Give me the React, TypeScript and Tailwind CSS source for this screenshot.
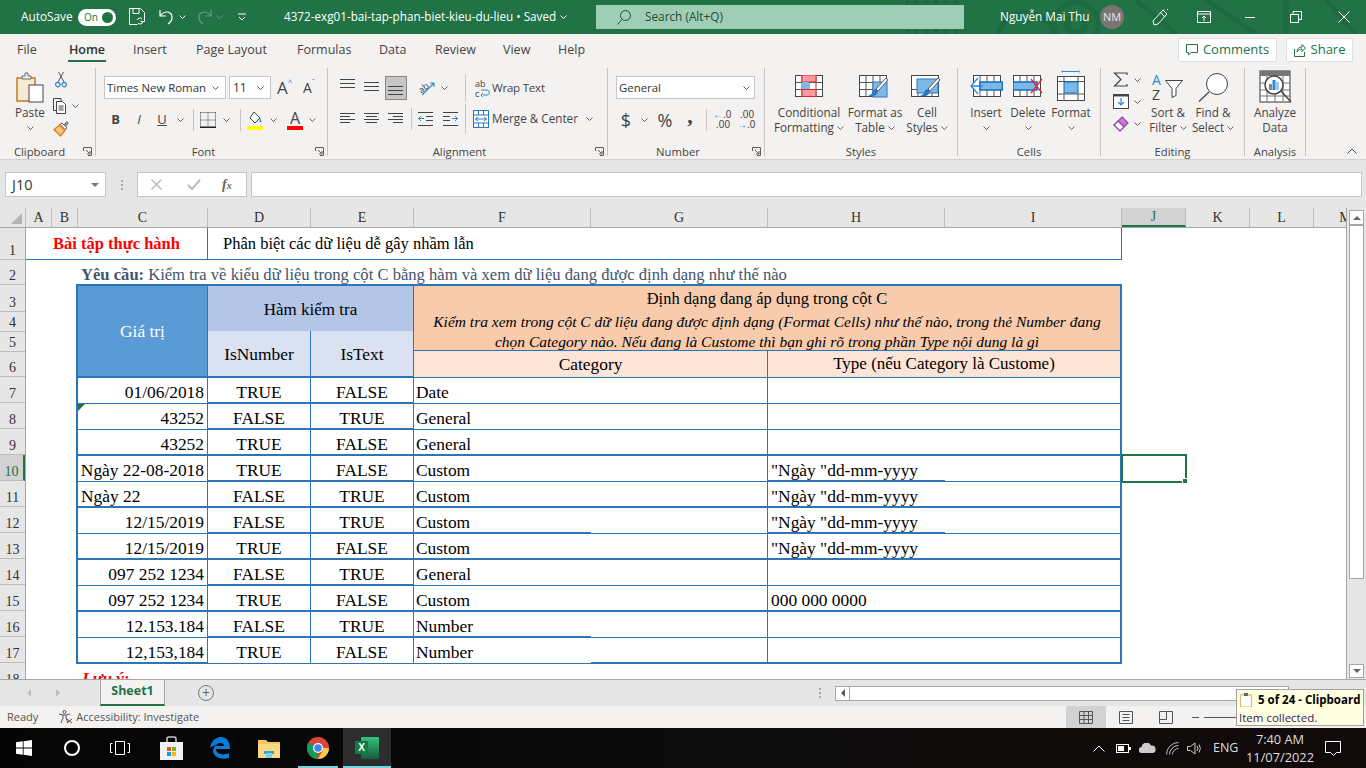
import React from "react";

const SERIF = "font-['Liberation_Serif',serif]";
const BLUE = "border-[#2e75b6]";

const Chev = ({ color = "#605e5c" }: { color?: string }) => (
  <svg width="7" height="4" viewBox="0 0 7 4" className="shrink-0">
    <path d="M.5.5l3 3 3-3" fill="none" stroke={color} />
  </svg>
);

const ChevBox = ({ className }: { className: string }) => (
  <div className={`flex items-center justify-center ${className}`}>
    <Chev />
  </div>
);

const Launcher = () => (
  <svg width="9" height="9" viewBox="0 0 9 9" className="shrink-0">
    <path d="M.5 4V.5H8.500V8.500H5M3 3l4 4M7 4v3H4" fill="none" stroke="#605e5c" />
  </svg>
);

function Group({ className, pad = "", label, launcher, children }: { className: string; pad?: string; label: string; launcher?: boolean; children: React.ReactNode }) {
  return (
    <div className={`flex flex-col h-[88px] mt-[2px] border-r border-[#c8c6c4] shrink-0 ${className}`}>
      <div className={`h-[76px] ${pad}`}>{children}</div>
      <div className="h-[12px] leading-[16px] flex text-[11.3px] text-[#444]">
        <div className="flex-1 text-center">{label}</div>
        {launcher && (
          <div className="w-[16px] flex items-center justify-start pl-[4px] pt-[3px]">
            <Launcher />
          </div>
        )}
      </div>
    </div>
  );
}

function BigBtn({ className, top = "pt-[7px]", icon, l1, l2, chev, chevBelow }: { className: string; top?: string; icon: React.ReactNode; l1: string; l2?: string; chev?: boolean; chevBelow?: boolean }) {
  return (
    <div className={`flex flex-col items-center text-[11.7px] leading-[15px] text-[#444] whitespace-nowrap shrink-0 ${className}`}>
      <div className={`h-[37px] flex items-start justify-center ${top}`}>{icon}</div>
      <div>{l1}</div>
      {l2 && (
        <div className="flex items-center gap-[3px]">
          {l2}
          {chev && <Chev />}
        </div>
      )}
      {chevBelow && (
        <div className="h-[15px] flex items-center">
          <Chev />
        </div>
      )}
    </div>
  );
}

// ---------- ribbon icons ----------
const Lines = ({ rows, tall }: { rows: [number, number, number][]; tall?: boolean }) => (
  <svg width="16" height={tall ? 24 : 14} viewBox={tall ? "0 0 16 24" : "0 0 16 14"} className="shrink-0">
    {rows.map(([x, w, y]) => (
      <rect key={`${x}${y}`} x={x} y={y} width={w} height="1" fill="#444" />
    ))}
  </svg>
);

const PasteIcon = () => (
  <svg width="29" height="31" viewBox="0 0 29 31">
    <rect x="1" y="6" width="18" height="23" fill="#f7e9d3" stroke="#c27c2c" strokeWidth="1.5" />
    <path d="M6 6V4h3V1h3v3h3v3H6z" fill="#f3f2f1" stroke="#666" />
    <rect x="13" y="13" width="14" height="17" fill="#fff" stroke="#444" />
  </svg>
);
const CutIcon = () => (
  <svg width="12" height="17" viewBox="0 0 12 17">
    <path d="M3 11L8.500 1M9 11L3.500 1" stroke="#555" fill="none" />
    <circle cx="2.800" cy="13.600" r="2.200" fill="none" stroke="#2b88d8" strokeWidth="1.200" />
    <circle cx="9.200" cy="13.600" r="2.200" fill="none" stroke="#2b88d8" strokeWidth="1.200" />
  </svg>
);
const CopyIcon = () => (
  <svg width="14" height="16" viewBox="0 0 14 16">
    <path d="M3 12.500H.5V.5H8V3" fill="none" stroke="#444" />
    <path d="M3.500 3.500h6l3 3v9h-9zM5.500 8h5M5.500 10h5M5.500 12h5" fill="#fff" stroke="#444" />
  </svg>
);
const PainterIcon = () => (
  <svg width="17" height="17" viewBox="0 0 17 17">
    <path d="M9 3l5 5-2 1.500-5-5z" fill="#fff" stroke="#555" />
    <path d="M14 1l2 2-3 4-2.500-2.500z" fill="#888" />
    <path d="M6.500 5L12 10.500 7.500 16 1 9.500z" fill="#fbc37a" stroke="#d97a12" strokeWidth="1.200" />
  </svg>
);
const BorderIcon = () => (
  <svg width="16" height="16" viewBox="0 0 16 16">
    <path d="M.5.5h15M.5.5v15M15.500.5v15M8 .5v15M.5 8h15" stroke="#444" strokeDasharray="1 1" fill="none" />
    <rect x="0" y="14.500" width="16" height="1.500" fill="#222" />
  </svg>
);
const FillIcon = () => (
  <svg width="17" height="19" viewBox="0 0 17 19">
    <path d="M7 1l6 6-5 5-5-5z" fill="#fff" stroke="#444" />
    <path d="M13 7c1 1.500 2 3 1 4s-2-.5-1-4z" fill="#2b88d8" />
    <rect x="0" y="15" width="16" height="4" fill="#ffff00" />
  </svg>
);
const ColorIcon = () => (
  <div className="flex flex-col items-center w-[16px] leading-none">
    <span className="text-[16px] h-[15px] text-[#444] leading-[15px]">A</span>
    <span className="block w-[16px] h-[4px] bg-[#ff0000]" />
  </div>
);
const OrientIcon = () => (
  <svg width="17" height="18" viewBox="0 0 17 18" className="overflow-visible">
    <text x="-1" y="11" fontSize="9" fill="#444" transform="rotate(-40 6 8)">ab</text>
    <path d="M3 16L15 4M15 4h-4M15 4v4" stroke="#2b88d8" fill="none" strokeWidth="1.200" />
  </svg>
);
const WrapIcon = () => (
  <svg width="16" height="20" viewBox="0 0 16 20" className="overflow-visible">
    <text x="0" y="9" fontSize="9" fill="#444">ab</text>
    <text x="0" y="19" fontSize="9" fill="#444">c</text>
    <path d="M8 17h4c3 0 3-5 0-5H6M8 15l-2 2 2 2" stroke="#2b88d8" fill="none" />
  </svg>
);
const MergeIcon = () => (
  <svg width="16" height="18" viewBox="0 0 16 18">
    <rect x=".5" y=".5" width="15" height="17" fill="#fff" stroke="#2b79c2" />
    <path d="M.5 5h15M.5 13h15M5.500.5V5M10.500.5V5M5.500 13v5M10.500 13v5" stroke="#2b79c2" />
    <path d="M2.500 9h11M5 7L2.500 9 5 11M11 7l2.500 2-2.500 2" stroke="#2b79c2" fill="none" />
  </svg>
);
const IndentIcon = ({ flip }: { flip?: boolean }) => (
  <svg width="15" height="14" viewBox="0 0 15 14" style={flip ? { transform: "scaleX(-1)" } : undefined}>
    <path d="M0 .5h15M8 4.500h7M8 8.500h7M0 13.500h15" stroke="#444" />
    <path d="M6 6.500H0M3 4L.5 6.500 3 9" stroke="#2b88d8" fill="none" />
  </svg>
);

const GridLines = () => (
  <>
    <rect x=".5" y=".5" width="27" height="21" fill="#fff" stroke="#444" />
    <path d="M7 .5v21M14 .5v21M21 .5v21M.5 7.500h27M.5 14.500h27" stroke="#555" />
  </>
);
const Brush = () => (
  <g>
    <path d="M29 5L19 16l-2-2L27 3z" fill="#fff" stroke="#555" />
    <path d="M17 14c-3 0-4 3-4 4s-2 2-4 2c3 2 9 2 10-4z" fill="#2b79c2" />
  </g>
);
const ConditionalIcon = () => (
  <svg width="28" height="22" viewBox="0 0 28 22">
    <GridLines />
    <rect x="7" y="0" width="14" height="7" fill="#ff9a9e" stroke="#e3242b" />
    <rect x="7" y="7" width="7" height="7.500" fill="#7cb8e8" />
    <rect x="7" y="14.500" width="14" height="7" fill="#ff9a9e" stroke="#e3242b" />
  </svg>
);
const FormatTableIcon = () => (
  <svg width="32" height="27" viewBox="0 0 32 27">
    <GridLines />
    <rect x="14" y="7" width="14" height="15" fill="#7cb8e8" stroke="#2b79c2" />
    <Brush />
  </svg>
);
const CellStylesIcon = () => (
  <svg width="32" height="27" viewBox="0 0 32 27">
    <rect x=".5" y=".5" width="27" height="21" fill="#fff" stroke="#444" />
    <path d="M7 14.500v7M14 14.500v7M21 14.500v7M.5 14.500h27" stroke="#555" />
    <rect x="6" y="4" width="21" height="14" fill="#7cb8e8" stroke="#2b79c2" />
    <Brush />
  </svg>
);
const InsertIcon = () => (
  <svg width="33" height="22" viewBox="0 0 33 22">
    <rect x="3.500" y=".5" width="27" height="21" fill="#fff" stroke="#444" />
    <path d="M10 .5v21M17 .5v21M24 .5v21" stroke="#555" />
    <rect x="10" y="7" width="22.500" height="8" fill="#7cb8e8" stroke="#106ebe" strokeWidth="1.500" />
    <path d="M8 3L1 11l7 8M1 11h12" fill="#fff" stroke="#2b88d8" strokeWidth="1.300" />
  </svg>
);
const DeleteIcon = () => (
  <svg width="30" height="22" viewBox="0 0 30 22">
    <rect x=".5" y=".5" width="27" height="21" fill="#fff" stroke="#444" />
    <path d="M7 .5v21M14 .5v21M21 .5v21" stroke="#555" />
    <rect x="0" y="7" width="24" height="8" fill="#7cb8e8" stroke="#106ebe" strokeWidth="1.500" />
    <path d="M18 4l11 14M29 4L18 18" stroke="#e3242b" strokeWidth="1.300" />
  </svg>
);
const FormatIcon = () => (
  <svg width="28" height="31" viewBox="0 0 28 31">
    <path d="M5 1.500h17M5 .5v2M22 .5v2" stroke="#2b88d8" fill="none" />
    <rect x=".5" y="6.500" width="27" height="24" fill="#fff" stroke="#444" />
    <path d="M7 6.500v5M21 6.500v5M7 24v7M21 24v7M.5 11.500h27M.5 24h27" stroke="#555" />
    <rect x="7" y="12" width="14" height="11" fill="#7cb8e8" stroke="#106ebe" />
  </svg>
);
const SigmaIcon = () => (
  <svg width="15" height="15" viewBox="0 0 15 15">
    <path d="M14 3V1H1.500L8 7.500 1.500 14H14v-2" fill="none" stroke="#444" strokeWidth="1.200" />
  </svg>
);
const FillDownIcon = () => (
  <svg width="16" height="15" viewBox="0 0 16 15">
    <rect x=".5" y=".5" width="15" height="14" fill="#fff" stroke="#444" />
    <rect x="0" y="0" width="16" height="2.500" fill="#444" />
    <path d="M8 4v7M5 8l3 3 3-3" stroke="#2b88d8" fill="none" strokeWidth="1.200" />
  </svg>
);
const EraserIcon = () => (
  <svg width="16" height="16" viewBox="0 0 16 16">
    <path d="M9 1l6 6-8 8-6-6z" fill="#c27fd0" stroke="#9a3fb0" strokeWidth="1.200" />
    <path d="M5 5l6 6-4 4-6-6z" fill="#fff" stroke="#9a3fb0" strokeWidth="1.200" />
  </svg>
);
const SortIcon = () => (
  <svg width="32" height="28" viewBox="0 0 32 28" className="overflow-visible">
    <text x="0" y="12" fontSize="14" fill="#2b88d8">A</text>
    <text x="0" y="27" fontSize="14" fill="#444">Z</text>
    <path d="M13.500 7.500h17l-6.500 8v7l-4 2v-9z" fill="#fff" stroke="#444" />
  </svg>
);
const FindIcon = () => (
  <svg width="31" height="29" viewBox="0 0 31 29">
    <circle cx="19" cy="11" r="10.500" fill="#fff" stroke="#444" />
    <path d="M11 19L1 28.500" stroke="#444" strokeWidth="1.200" />
  </svg>
);
const AnalyzeIcon = () => (
  <svg width="33" height="33" viewBox="0 0 33 33">
    <rect x="1" y="1" width="30" height="31" fill="#fff" stroke="#555" strokeWidth="1.200" />
    <rect x="1" y="1" width="30" height="5" fill="#777" />
    <path d="M8 6v26M16 6v26M24 6v26M1 13h30M1 20h30M1 26h30" stroke="#777" />
    <circle cx="15" cy="15" r="9" fill="#fff" stroke="#444" strokeWidth="1.500" />
    <rect x="10" y="14" width="3" height="6" fill="#888" />
    <rect x="13.500" y="10" width="3" height="10" fill="#2b88d8" />
    <rect x="17" y="12" width="3" height="8" fill="#a0c8ea" />
    <path d="M22 21l10 11" stroke="#444" strokeWidth="1.500" />
  </svg>
);

// ---------- title bar ----------
function TitleBar() {
  return (
    <div className="relative h-[34px] shrink-0 bg-[#217346] text-white flex items-center text-[11.8px] whitespace-nowrap">
      <svg className="absolute right-0 top-0" width="460" height="34" viewBox="0 0 460 34" fill="none" stroke="#1d6a40" strokeWidth="5">
        <path d="M0 0v34M10 0v34M20 0v34M30 0v34M40 0v34M50 0v34" />
        <circle cx="170" cy="24" r="22" />
        <circle cx="170" cy="24" r="9" />
        <circle cx="120" cy="40" r="28" />
        <path d="M230 0l40 34M300 0l50 34M380 0v34M420 0l30 34" />
      </svg>
      <div className="relative flex items-center w-full">
        <span className="ml-[21px] w-[54px]">AutoSave</span>
        <div className="ml-[3px] w-[38px] h-[17px] rounded-full bg-white text-[#217346] flex items-center justify-between pl-[6px] pr-[3px] text-[10px]">
          On
          <span className="w-[11px] h-[11px] rounded-full bg-[#217346]" />
        </div>
        <svg className="ml-[13px]" width="16" height="18" viewBox="0 0 16 18" fill="none" stroke="#fff">
          <path d="M.5.5h11l4 4v9h-4M.5.5v16h8M4 .5v5h6v-5" />
          <path d="M8 12a3 3 0 015-1M14 14a3 3 0 01-5 1" />
        </svg>
        <svg className="ml-[14px]" width="16" height="16" viewBox="0 0 16 16" fill="none" stroke="#fff" strokeWidth="1.200">
          <path d="M1 1v6h6M1 7c3-4 7-5 10-3s3 8-2 11" />
        </svg>
        <div className="ml-[4px]"><Chev color="#fff" /></div>
        <svg className="ml-[10px]" width="16" height="16" viewBox="0 0 16 16" fill="none" stroke="#5f9e7d" strokeWidth="1.200">
          <path d="M15 1v6H9M15 7c-3-4-7-5-10-3s-3 8 2 11" />
        </svg>
        <div className="ml-[4px]"><Chev color="#5f9e7d" /></div>
        <svg className="ml-[15px]" width="8" height="8" viewBox="0 0 8 8" fill="none" stroke="#fff">
          <path d="M0 1h8M1 4l3 3 3-3" />
        </svg>
        <span className="ml-[38px] w-[272px] text-[11.7px]">4372-exg01-bai-tap-phan-biet-kieu-du-lieu • Saved</span>
        <div className="ml-[4px]"><Chev color="#fff" /></div>
        <div className="ml-[29px] w-[368px] h-[24px] bg-[#a0cdb5] flex items-center text-[#1e4d36]">
          <svg className="ml-[21px]" width="14" height="15" viewBox="0 0 14 15" fill="none" stroke="#1e4d36">
            <circle cx="8.500" cy="5.500" r="5" />
            <path d="M5 9.500l-4.500 5" />
          </svg>
          <span className="ml-[14px]">Search (Alt+Q)</span>
        </div>
        <span className="ml-[36px] w-[100px]">Nguyễn Mai Thu</span>
        <div className="w-[24px] h-[24px] rounded-full bg-[#7a7574] text-[#e6e6e6] text-[11px] flex items-center justify-center">NM</div>
        <svg className="ml-[28px]" width="16" height="17" viewBox="0 0 16 17" fill="none" stroke="#fff">
          <path d="M11 1l4 4-9 10-4 1-1-4zM8 3l5 5M12 .5l-1-1M15 1l1-1" />
        </svg>
        <svg className="ml-[29px]" width="14" height="12" viewBox="0 0 14 12" fill="none" stroke="#fff">
          <path d="M.5.5h13v11H.5zM.5 3h13M7 10V5M5 7l2-2 2 2" />
        </svg>
        <span className="ml-[34px] w-[10px] h-px bg-white" />
        <svg className="ml-[35px]" width="12" height="12" viewBox="0 0 12 12" fill="none" stroke="#fff">
          <path d="M.5 3.500h8v8h-8zM3 3.500V.5h8.500v8h-3" />
        </svg>
        <svg className="ml-[36px]" width="12" height="12" viewBox="0 0 12 12" fill="none" stroke="#fff">
          <path d="M.5.5l11 11M11.500.5l-11 11" />
        </svg>
      </div>
    </div>
  );
}

function Tabs() {
  return (
    <div className="h-[32px] shrink-0 bg-[#f3f2f1] flex items-center text-[12.5px] text-[#444] whitespace-nowrap">
      <span className="ml-[17px] w-[51px]">File</span>
      <div className="w-[38px] h-[32px] relative flex flex-col items-center justify-center font-semibold text-[#333]">
        Home
        <span className="absolute left-0 right-0 bottom-[4px] h-[2px] bg-[#217346]" />
      </div>
      <span className="ml-[27px] w-[63px]">Insert</span>
      <span className="w-[101px]">Page Layout</span>
      <span className="w-[82px]">Formulas</span>
      <span className="w-[56px]">Data</span>
      <span className="w-[68px]">Review</span>
      <span className="w-[55px]">View</span>
      <span className="w-[620px]">Help</span>
      <div className="w-[99px] h-[24px] rounded-[2px] bg-white border border-[#e1dfdd] flex items-center justify-center gap-[5px] text-[13px] text-[#217346]">
        <svg width="12" height="12" viewBox="0 0 12 12" fill="none" stroke="#217346">
          <path d="M.5.5h11v8H5L2.500 11V8.500h-2z" />
        </svg>
        Comments
      </div>
      <div className="ml-[9px] w-[67px] h-[24px] rounded-[2px] bg-white border border-[#e1dfdd] flex items-center justify-center gap-[5px] text-[13px] text-[#217346]">
        <svg width="12" height="13" viewBox="0 0 12 13" fill="none" stroke="#217346">
          <path d="M.5 5v7.500h10V8M3 8c0-3 2-5 5-5V.5L11.500 4 8 7.500V5C6 5 4 6 3 8z" />
        </svg>
        Share
      </div>
    </div>
  );
}

function Ribbon() {
  return (
    <div className="relative h-[94px] shrink-0 bg-[#f3f2f1] border-b border-[#d2d0ce] flex text-[12px] text-[#444] whitespace-nowrap">
      <Group className="w-[96px]" label="Clipboard" launcher>
        <div className="flex">
          <BigBtn className="w-[46px] ml-[7px]" top="pt-[4px]" icon={<PasteIcon />} l1="Paste" chevBelow />
          <div className="flex flex-col pt-[3px]">
            <div className="h-[23px] flex items-start pl-[2px]"><CutIcon /></div>
            <div className="h-[24px] flex items-center gap-[5px]"><CopyIcon /><Chev /></div>
            <div className="h-[20px] flex items-center"><PainterIcon /></div>
          </div>
        </div>
      </Group>

      <Group className="w-[232px]" pad="pl-[8px]" label="Font" launcher>
        <div className="pt-[8px] h-[36px] flex items-start">
          <div className="w-[122px] h-[23px] bg-white border border-[#c8c6c4] flex items-center justify-between pl-[2px] pr-[6px] text-[11.4px] text-[#333]">
            Times New Roman <Chev />
          </div>
          <div className="ml-[3px] w-[42px] h-[23px] bg-white border border-[#c8c6c4] flex items-center justify-between pl-[3px] pr-[6px] text-[12px] text-[#333]">
            11 <Chev />
          </div>
          <div className="ml-[6px] w-[18px] h-[23px] text-[17px] leading-[23px] flex items-start">A<span className="text-[8px] leading-[12px] text-[#2b88d8]">^</span></div>
          <div className="ml-[8px] w-[15px] h-[23px] text-[14px] leading-[24px] flex items-start">A<span className="text-[8px] leading-[10px] text-[#2b88d8]">ˇ</span></div>
        </div>
        <div className="mt-[5px] h-[22px] flex items-center">
          <span className="w-[23px] text-center font-bold text-[13px]">B</span>
          <span className="w-[24px] text-center italic text-[13px]">I</span>
          <span className="w-[22px] text-center underline text-[13px]">U</span>
          <ChevBox className="w-[14px]" />
          <span className="ml-[6px] w-px h-[22px] bg-[#c8c6c4]" />
          <div className="ml-[6px]"><BorderIcon /></div>
          <ChevBox className="w-[20px]" />
          <span className="ml-[4px] w-px h-[22px] bg-[#c8c6c4]" />
          <div className="ml-[6px]"><FillIcon /></div>
          <ChevBox className="w-[18px]" />
          <div className="ml-[5px]"><ColorIcon /></div>
          <ChevBox className="w-[18px]" />
        </div>
      </Group>

      <Group className="w-[280px]" pad="pl-[12px]" label="Alignment" launcher>
        <div className="pt-[6px] h-[34px] flex items-center">
          <Lines tall rows={[[0, 15, 3], [0, 15, 7], [0, 15, 11]]} />
          <div className="ml-[8px]"><Lines tall rows={[[0, 15, 6], [0, 15, 10], [0, 15, 14]]} /></div>
          <div className="ml-[5px] w-[22px] h-[24px] bg-[#c8c6c4] border border-[#8a8886] flex items-center justify-center">
            <Lines tall rows={[[0, 15, 10], [0, 15, 14], [0, 15, 18]]} />
          </div>
          <div className="ml-[12px]"><OrientIcon /></div>
          <ChevBox className="w-[16px]" />
          <span className="ml-[13px] w-px h-[28px] bg-[#c8c6c4]" />
          <div className="ml-[9px]"><WrapIcon /></div>
          <span className="ml-[1px] text-[11.5px] tracking-[-0.2px]">Wrap Text</span>
        </div>
        <div className="mt-[2px] h-[30px] flex items-center">
          <Lines rows={[[0, 15, 1], [0, 10, 4], [0, 15, 7], [0, 10, 10]]} />
          <div className="ml-[8px]"><Lines rows={[[0, 15, 1], [2, 11, 4], [0, 15, 7], [2, 11, 10]]} /></div>
          <div className="ml-[8px]"><Lines rows={[[0, 15, 1], [5, 10, 4], [0, 15, 7], [5, 10, 10]]} /></div>
          <span className="ml-[7px] w-px h-[22px] bg-[#c8c6c4]" />
          <div className="ml-[6px]"><IndentIcon /></div>
          <div className="ml-[10px]"><IndentIcon flip /></div>
          <span className="ml-[7px] w-px h-[30px] bg-[#c8c6c4]" />
          <div className="ml-[7px]"><MergeIcon /></div>
          <span className="ml-[3px] text-[11.7px]">Merge &amp; Center</span>
          <div className="ml-[8px]"><Chev /></div>
        </div>
      </Group>

      <Group className="w-[157px]" pad="pl-[8px]" label="Number" launcher>
        <div className="pt-[8px] h-[36px]">
          <div className="w-[139px] h-[23px] bg-white border border-[#c8c6c4] flex items-center justify-between pl-[2px] pr-[4px] text-[11.4px] text-[#333]">
            General <Chev />
          </div>
        </div>
        <div className="mt-[5px] h-[22px] flex items-center">
          <span className="w-[20px] text-center text-[18px] leading-[22px]">$</span>
          <ChevBox className="w-[16px]" />
          <span className="ml-[4px] w-[18px] text-center text-[18px] leading-[22px]">%</span>
          <span className={`ml-[8px] w-[16px] text-center text-[22px] font-bold h-[22px] leading-[14px] ${SERIF}`}>,</span>
          <span className="ml-[8px] w-px h-[22px] bg-[#c8c6c4]" />
          <div className="ml-[6px] w-[17px] text-[10px] leading-[10px] text-right font-['Liberation_Sans',sans-serif]">
            <span className="text-[#2b88d8]">←</span>.0<br />.00
          </div>
          <div className="ml-[7px] w-[17px] text-[10px] leading-[10px] text-right font-['Liberation_Sans',sans-serif]">
            .00<br /><span className="text-[#2b88d8]">→</span>.0
          </div>
        </div>
      </Group>

      <Group className="w-[193px]" pad="pl-[3px]" label="Styles">
        <div className="flex">
          <BigBtn className="w-[82px]" icon={<ConditionalIcon />} l1="Conditional" l2="Formatting" chev />
          <BigBtn className="w-[50px]" icon={<FormatTableIcon />} l1="Format as" l2="Table" chev />
          <BigBtn className="w-[54px]" icon={<CellStylesIcon />} l1="Cell" l2="Styles" chev />
        </div>
      </Group>

      <Group className="w-[143px]" pad="pl-[4px]" label="Cells">
        <div className="flex">
          <BigBtn className="w-[48px]" icon={<InsertIcon />} l1="Insert" chevBelow />
          <BigBtn className="w-[36px]" icon={<DeleteIcon />} l1="Delete" chevBelow />
          <BigBtn className="w-[50px]" top="pt-[2px]" icon={<FormatIcon />} l1="Format" chevBelow />
        </div>
      </Group>

      <Group className="w-[144px]" pad="pl-[12px]" label="Editing">
        <div className="flex">
          <div className="w-[36px] flex flex-col pt-[4px] gap-[7px]">
            <div className="flex items-center gap-[6px] h-[15px]"><SigmaIcon /><Chev /></div>
            <div className="flex items-center gap-[5px] h-[15px]"><FillDownIcon /><Chev /></div>
            <div className="flex items-center gap-[5px] h-[16px]"><EraserIcon /><Chev /></div>
          </div>
          <BigBtn className="w-[38px]" top="pt-[5px]" icon={<SortIcon />} l1="Sort &" l2="Filter" chev />
          <BigBtn className="w-[52px]" top="pt-[5px]" icon={<FindIcon />} l1="Find &" l2="Select" chev />
        </div>
      </Group>

      <Group className="w-[61px]" label="Analysis">
        <BigBtn className="w-full" top="pt-[2px]" icon={<AnalyzeIcon />} l1="Analyze" l2="Data" />
      </Group>

      <svg className="absolute right-[9px] bottom-[5px]" width="10" height="6" viewBox="0 0 10 6" fill="none" stroke="#444">
        <path d="M.5 5.500L5 1l4.500 4.500" />
      </svg>
    </div>
  );
}

function FormulaBar() {
  return (
    <div className="h-[48px] shrink-0 bg-[#e6e6e6] flex items-center pt-[1px] pl-[5px]">
      <div className="w-[101px] h-[25px] bg-white border border-[#c8c6c4] flex items-center justify-between pl-[6px] pr-[6px] text-[14.5px] text-[#333]">
        J10
        <span className="w-0 h-0 border-x-[4px] border-x-transparent border-t-[4px] border-t-[#777]" />
      </div>
      <div className="ml-[15px] w-[3px] flex flex-col gap-[2px]">
        <span className="w-[2px] h-[2px] bg-[#aaa]" />
        <span className="w-[2px] h-[2px] bg-[#aaa]" />
        <span className="w-[2px] h-[2px] bg-[#aaa]" />
      </div>
      <div className="ml-[13px] w-[110px] h-[25px] bg-white border border-[#c8c6c4] flex items-center">
        <svg className="ml-[13px]" width="11" height="11" viewBox="0 0 11 11" stroke="#bbb" strokeWidth="1.500">
          <path d="M.5.5l10 10M10.500.5l-10 10" />
        </svg>
        <svg className="ml-[25px]" width="14" height="11" viewBox="0 0 14 11" fill="none" stroke="#bbb" strokeWidth="2">
          <path d="M1 6l4 4 8-9" />
        </svg>
        <span className={`ml-[21px] italic text-[14px] font-bold text-[#666] ${SERIF}`}>
          f<span className="text-[10px]">x</span>
        </span>
      </div>
      <div className="ml-[4px] w-[1111px] h-[25px] bg-white border border-[#c8c6c4]" />
    </div>
  );
}

const COLS: [string, string][] = [
  ["A", "w-[26px]"],
  ["B", "w-[26px]"],
  ["C", "w-[130px]"],
  ["D", "w-[103px]"],
  ["E", "w-[103px]"],
  ["F", "w-[177px]"],
  ["G", "w-[177px]"],
  ["H", "w-[177px]"],
  ["I", "w-[177px]"],
  ["J", "w-[64px]"],
  ["K", "w-[64px]"],
  ["L", "w-[64px]"],
  ["M", "w-[64px]"],
];

function ColHeaders() {
  return (
    <div className={`h-[20px] flex bg-[#e6e6e6] border-b border-[#a6a6a6] text-[14px] text-[#333] overflow-hidden ${SERIF}`}>
      <div className="w-[26px] shrink-0 border-r border-[#bdbdbd] relative">
        <span className="absolute right-[3px] bottom-[3px] w-0 h-0 border-l-[11px] border-l-transparent border-b-[11px] border-b-[#b4b4b4]" />
      </div>
      {COLS.map(([c, w]) => (
        <div
          key={c}
          className={`${w} shrink-0 flex items-center justify-center border-r border-[#bdbdbd] ${
            c === "J" ? "bg-[#d2d2d2] text-[#217346] border-b-2 border-b-[#217346]" : ""
          }`}
        >
          {c}
        </div>
      ))}
    </div>
  );
}

const ROW_NUMS: [number, string][] = [
  [1, "h-[32px]"],
  [2, "h-[25px]"],
  [3, "h-[27px]"],
  [4, "h-[20px]"],
  [5, "h-[20px]"],
  [6, "h-[25px]"],
  [7, "h-[26px]"],
  [8, "h-[26px]"],
  [9, "h-[26px]"],
  [10, "h-[26px]"],
  [11, "h-[26px]"],
  [12, "h-[26px]"],
  [13, "h-[26px]"],
  [14, "h-[26px]"],
  [15, "h-[26px]"],
  [16, "h-[26px]"],
  [17, "h-[26px]"],
  [18, "h-[26px]"],
];

function RowHeaders() {
  return (
    <div className={`w-[26px] shrink-0 bg-[#e6e6e6] border-r border-[#a6a6a6] text-[14px] text-[#333] overflow-hidden ${SERIF}`}>
      {ROW_NUMS.map(([n, h]) => (
        <div
          key={n}
          className={`${h} flex items-end justify-center leading-[14px] pb-[1px] border-b border-[#bdbdbd] ${n === 10 ? "bg-[#d2d2d2] text-[#217346] border-r-2 border-r-[#217346]" : ""}`}
        >
          {n}
        </div>
      ))}
    </div>
  );
}

// true = thick line under the cell
type Row = { n: number; c: string; left?: boolean; d: string; e: string; f: string; h?: string; lc?: boolean; lde?: boolean; lf?: boolean; lg?: boolean; lh?: boolean; li?: boolean };
const ALL = { lc: true, lde: true, lf: true, lg: true, lh: true, li: true };
const ROWS: Row[] = [
  { n: 7, c: "01/06/2018", d: "TRUE", e: "FALSE", f: "Date", lde: true },
  { n: 8, c: "43252", d: "FALSE", e: "TRUE", f: "General", lde: true },
  { n: 9, c: "43252", d: "TRUE", e: "FALSE", f: "General", ...ALL },
  { n: 10, c: "Ngày 22-08-2018", d: "TRUE", e: "FALSE", f: "Custom", h: '"Ngày "dd-mm-yyyy', lde: true, lh: true },
  { n: 11, c: "Ngày 22", left: true, d: "FALSE", e: "TRUE", f: "Custom", h: '"Ngày "dd-mm-yyyy', ...ALL },
  { n: 12, c: "12/15/2019", d: "FALSE", e: "TRUE", f: "Custom", h: '"Ngày "dd-mm-yyyy', lde: true, lf: true, lh: true },
  { n: 13, c: "12/15/2019", d: "TRUE", e: "FALSE", f: "Custom", h: '"Ngày "dd-mm-yyyy', ...ALL },
  { n: 14, c: "097 252 1234", d: "FALSE", e: "TRUE", f: "General", lde: true },
  { n: 15, c: "097 252 1234", d: "TRUE", e: "FALSE", f: "Custom", h: "000 000 0000", ...ALL },
  { n: 16, c: "12.153.184", d: "FALSE", e: "TRUE", f: "Number", lde: true, lf: true },
  { n: 17, c: "12,153,184", d: "TRUE", e: "FALSE", f: "Number", lc: true, lg: true, lh: true, li: true },
];

const under = (thick?: boolean) => (thick ? "border-b-2" : "border-b");

function DataRow({ r }: { r: Row }) {
  return (
    <div className={`relative h-[26px] flex leading-[26px] ${BLUE}`}>
      <div className={`relative w-[132px] shrink-0 border-l-2 border-r ${BLUE} ${under(r.lc)} flex items-start pt-[1px] pl-[3px] pr-[3px] whitespace-nowrap ${r.left ? "justify-start" : "justify-end"}`}>
        {r.n === 8 && (
          <span className="absolute left-0 top-0 w-0 h-0 border-r-[7px] border-r-transparent border-t-[7px] border-t-[#217346]" />
        )}
        {r.c}
      </div>
      <div className={`w-[103px] shrink-0 border-r ${BLUE} ${under(r.lde)} flex items-start pt-[1px] justify-center`}>{r.d}</div>
      <div className={`w-[103px] shrink-0 border-r ${BLUE} ${under(r.lde)} flex items-start pt-[1px] justify-center`}>{r.e}</div>
      <div className={`w-[177px] shrink-0 ${BLUE} ${under(r.lf)} flex items-start pt-[1px] pl-[2px]`}>{r.f}</div>
      <div className={`w-[177px] shrink-0 border-r ${BLUE} ${under(r.lg)}`} />
      <div className={`w-[177px] shrink-0 ${BLUE} ${under(r.lh)} flex items-start pt-[1px] pl-[3px] whitespace-nowrap`}>{r.h}</div>
      <div className={`w-[177px] shrink-0 border-r-2 ${BLUE} ${under(r.li)}`} />
      {r.n === 10 && (
        <div className="absolute left-[1045px] -top-[2px] w-[66px] h-[29px] border-2 border-[#217346]">
          <span className="absolute -right-[3px] -bottom-[3px] w-[6px] h-[6px] bg-[#217346] border border-white" />
        </div>
      )}
    </div>
  );
}

function Sheet() {
  return (
    <div className={`flex-1 overflow-hidden bg-white text-[17.4px] text-black ${SERIF}`}>
      {/* row 1 */}
      <div className={`h-[32px] flex border-b ${BLUE} w-[1096px]`}>
        <div className="w-[181px] flex items-center justify-center pt-[1px] font-bold text-[#ff0000] text-[16.5px]">Bài tập thực hành</div>
        <div className={`flex-1 border-l border-r ${BLUE} flex items-center pt-[1px] pl-[15px] text-[16.5px]`}>Phân biệt các dữ liệu dễ gây nhầm lẫn</div>
      </div>
      {/* row 2 */}
      <div className="h-[24px] flex items-end pl-[55px] text-[#44546a] text-[16.6px] leading-[19px]">
        <span className="font-bold mr-[4px]">Yêu cầu:</span>
        Kiểm tra về kiểu dữ liệu trong cột C bằng hàm và xem dữ liệu đang được định dạng như thế nào
      </div>
      {/* table */}
      <div className="ml-[50px] w-[1046px]">
        <div className={`h-[94px] flex border-t-2 border-b-2 border-l-2 border-r-2 ${BLUE}`}>
          <div className={`w-[130px] shrink-0 bg-[#5b9bd5] text-white border-r ${BLUE} flex items-center justify-center pt-[1px]`}>Giá trị</div>
          <div className="w-[206px] shrink-0 flex flex-col">
            <div className={`h-[45px] bg-[#b4c6e7] border-r ${BLUE} flex items-center justify-center pt-[2px] text-[17px]`}>Hàm kiểm tra</div>
            <div className="flex-1 flex">
              <div className={`w-[103px] bg-[#d9e1f2] border-r ${BLUE} flex items-center justify-center pt-[2px]`}>IsNumber</div>
              <div className={`w-[103px] bg-[#d9e1f2] border-r ${BLUE} flex items-center justify-center pt-[2px]`}>IsText</div>
            </div>
          </div>
          <div className="flex-1 flex flex-col">
            <div className={`h-[65px] bg-[#f8cbad] border-b ${BLUE} flex flex-col items-center text-center`}>
              <div className="h-[26px] leading-[26px] text-[16.5px]">Định dạng đang áp dụng trong cột C</div>
              <div className="italic text-[15.5px] leading-[20px] w-[690px]">
                Kiểm tra xem trong cột C dữ liệu đang được định dạng (Format Cells) như thế nào, trong thẻ Number đang chọn Category nào. Nếu đang là Custome thì bạn ghi rõ trong phần Type nội dung là gì
              </div>
            </div>
            <div className="flex-1 flex bg-[#fce4d6]">
              <div className={`w-[354px] border-r ${BLUE} flex items-center justify-center`}>Category</div>
              <div className="flex-1 flex items-center justify-center text-[17px]">Type (nếu Category là Custome)</div>
            </div>
          </div>
        </div>
        {ROWS.map((r) => (
          <DataRow key={r.n} r={r} />
        ))}
      </div>
      {/* row 18, cut off by the tab strip */}
      <div className="pl-[56px] pt-[2px] font-bold italic text-[#ff0000] text-[17px]">Lưu ý:</div>
    </div>
  );
}

function VScroll() {
  return (
    <div className="w-[20px] shrink-0 bg-[#e6e6e6] border-l border-[#a6a6a6] flex flex-col items-center pt-[2px] pb-[1px]">
      <div className="w-[15px] h-[15px] bg-white border border-[#a6a6a6] flex items-center justify-center">
        <span className="w-0 h-0 border-x-[4px] border-x-transparent border-b-[4px] border-b-[#666]" />
      </div>
      <div className="w-[15px] h-[354px] bg-white border border-[#a6a6a6]" />
      <div className="flex-1" />
      <div className="w-[15px] h-[14px] bg-white border border-[#a6a6a6] flex items-center justify-center">
        <span className="w-0 h-0 border-x-[4px] border-x-transparent border-t-[4px] border-t-[#666]" />
      </div>
    </div>
  );
}

function SheetTabs() {
  return (
    <div className="relative h-[27px] shrink-0 bg-[#e6e6e6] border-t border-[#a6a6a6] flex items-center text-[12.5px]">
      <span className="ml-[27px] w-0 h-0 border-y-[4px] border-y-transparent border-r-[4px] border-r-[#c0c0c0]" />
      <span className="ml-[25px] w-0 h-0 border-y-[4px] border-y-transparent border-l-[4px] border-l-[#c0c0c0]" />
      <div className="ml-[40px] w-[65px] h-[26px] -mt-[1px] bg-[#f3f2f1] border-x border-[#a6a6a6] border-b-2 border-b-[#217346] flex items-center justify-center font-bold text-[#217346]">
        Sheet1
      </div>
      <div className="ml-[33px] w-[16px] h-[16px] rounded-full border border-[#777] flex items-center justify-center text-[#666] text-[14px] leading-none">+</div>
      <div className="ml-[605px] w-[2px] flex flex-col gap-[2px]">
        <span className="w-[2px] h-[2px] bg-[#aaa]" />
        <span className="w-[2px] h-[2px] bg-[#aaa]" />
        <span className="w-[2px] h-[2px] bg-[#aaa]" />
      </div>
      <div className="ml-[14px] w-[15px] h-[15px] bg-white border border-[#a6a6a6] flex items-center justify-center">
        <span className="w-0 h-0 border-y-[4px] border-y-transparent border-r-[4px] border-r-[#555]" />
      </div>
      <div className="w-[439px] h-[15px] bg-white border-y border-r border-[#a6a6a6]" />
    </div>
  );
}

function StatusBar() {
  return (
    <div className="relative h-[22px] shrink-0 bg-[#f3f2f1] flex items-center text-[11px] text-[#555] whitespace-nowrap">
      <div className="w-[1066px] flex items-center">
        <span className="ml-[7px]">Ready</span>
        <svg className="ml-[20px]" width="15" height="14" viewBox="0 0 15 14" fill="none" stroke="#555">
          <circle cx="6.500" cy="2" r="1.500" />
          <path d="M1 4l4 1h3l4-1M5 5v3l-2 5M8 5v3l2 5M9 9l5 4M14 9l-5 4" />
        </svg>
        <span className="ml-[3px]">Accessibility: Investigate</span>
      </div>
      <div className="w-[40px] h-[22px] bg-[#d2d2d2] flex items-center justify-center">
        <svg width="14" height="13" viewBox="0 0 14 13" fill="none" stroke="#555">
          <path d="M.5.5h13v12H.5zM5 .5v12M9.500.5v12M.5 4.500h13M.5 8.500h13" />
        </svg>
      </div>
      <svg className="ml-[13px]" width="14" height="13" viewBox="0 0 14 13" fill="none" stroke="#555">
        <path d="M.5.5h13v12H.5zM3.500 3.500h7M3.500 6.500h7M3.500 9.500h7" />
      </svg>
      <svg className="ml-[26px]" width="14" height="13" viewBox="0 0 14 13" fill="none" stroke="#555">
        <path d="M.5.5h13v12H.5zM.5 8.500h7V.5" />
      </svg>
      <span className="ml-[19px] w-[7px] h-px bg-[#555]" />
      <span className="ml-[5px] w-[34px] h-px bg-[#555]" />
    </div>
  );
}

function ClipToast() {
  return (
    <div className="absolute left-[1236px] top-[689px] w-[128px] h-[37px] bg-[#ffffe1] border border-[#a0a0a0] text-[12px] leading-[16px]">
      <div className="flex items-center h-[20px] pl-[3px] font-bold text-black whitespace-nowrap text-[11.5px]">
        <svg className="mr-[6px]" width="12" height="14" viewBox="0 0 12 14">
          <rect x=".5" y="2" width="11" height="12" fill="#fff" stroke="#e0b870" strokeWidth="1.200" />
          <rect x="4" y="0" width="4" height="3" fill="#666" />
        </svg>
        5 of 24 - Clipboard
      </div>
      <div className="pl-[2px] text-[#3c1a5b] text-[11.5px] leading-[15px]">Item collected.</div>
    </div>
  );
}

function Taskbar() {
  return (
    <div className="relative h-[40px] shrink-0 bg-gradient-to-r from-[#050505] via-[#0b0b0b] to-[#120a0a] flex items-center text-white">
      <svg className="ml-[16px]" width="16" height="16" viewBox="0 0 16 16" fill="#fff">
        <path d="M0 2.200L6.800 1.300V7.600H0zM7.600 1.200L16 0V7.600H7.600zM0 8.400H6.800V14.700L0 13.800zM7.600 8.400H16V16L7.600 14.800z" />
      </svg>
      <span className="ml-[32px] w-[16px] h-[16px] rounded-full border-[2.5px] border-white" />
      <svg className="ml-[30px]" width="20" height="14" viewBox="0 0 20 14" fill="none" stroke="#fff">
        <path d="M5.500.5h9v13h-9zM2.500 2.500h-2v9h2M17.500 2.500h2v9h-2" />
      </svg>
      <svg className="ml-[30px]" width="23" height="24" viewBox="0 0 23 24">
        <path d="M7 6V3a2 2 0 012-2h5a2 2 0 012 2v3" fill="none" stroke="#ccc" strokeWidth="1.500" />
        <rect x="0" y="6" width="23" height="18" fill="#f2f2f2" />
        <rect x="7" y="11" width="4" height="4" fill="#f25022" />
        <rect x="12" y="11" width="4" height="4" fill="#7fba00" />
        <rect x="7" y="16" width="4" height="4" fill="#00a4ef" />
        <rect x="12" y="16" width="4" height="4" fill="#ffb900" />
      </svg>
      <svg className="ml-[27px]" width="20" height="22" viewBox="0 0 20 22">
        <path d="M0 11C1 4 6 0 11 0c6 0 9 5 9 12H6c0 5 7 7 13 4v5c-7 2-15 0-16-7 0-3 2-6 5-7C5 8 2 9 0 11zm6-2h8c0-4-7-4-8 0z" fill="#0a7bd6" />
      </svg>
      <svg className="ml-[28px]" width="22" height="20" viewBox="0 0 22 20">
        <path d="M0 2h8l2 2h12v16H0z" fill="#f7c65c" />
        <rect x="0" y="6" width="22" height="14" fill="#fbd97f" />
        <rect x="6" y="13" width="10" height="3" fill="#29a8e0" />
        <rect x="8" y="15" width="6" height="5" fill="#7fd0f0" />
      </svg>
      <svg className="ml-[27px]" width="22" height="22" viewBox="0 0 22 22">
        <circle cx="11" cy="11" r="11" fill="#db4437" />
        <path d="M11 11L1.500 16.500A11 11 0 0011 22z" fill="#0f9d58" />
        <path d="M1.500 16.500A11 11 0 011.500 5.500L11 11z" fill="#0f9d58" />
        <path d="M11 11h11a11 11 0 01-11 11l5-9z" fill="#ffcd40" />
        <circle cx="11" cy="11" r="5" fill="#fff" />
        <circle cx="11" cy="11" r="3.800" fill="#4285f4" />
      </svg>
      <div className="ml-[14px] w-[48px] h-[40px] bg-[#2d2d2d] flex items-center justify-center">
        <div className="relative w-[24px] h-[22px]">
          <div className="absolute right-0 top-0 w-[18px] h-[22px] rounded-[1px] bg-gradient-to-b from-[#33c481] to-[#185c37]" />
          <div className="absolute left-0 top-[4px] w-[13px] h-[13px] bg-[#107c41] flex items-center justify-center text-[10px] font-bold font-['Liberation_Sans',sans-serif]">X</div>
        </div>
      </div>
      <span className="absolute left-[298px] bottom-0 w-[40px] h-[2px] bg-[#76d4e0]" />
      <span className="absolute left-[343px] bottom-0 w-[48px] h-[2px] bg-[#76d4e0]" />
      <svg className="ml-[702px]" width="12" height="7" viewBox="0 0 12 7" fill="none" stroke="#fff">
        <path d="M.5 6.500L6 1l5.500 5.500" />
      </svg>
      <svg className="ml-[11px]" width="15" height="9" viewBox="0 0 15 9">
        <rect x=".5" y=".5" width="12" height="8" fill="none" stroke="#fff" />
        <rect x="2" y="2" width="6" height="5" fill="#fff" />
        <rect x="13" y="3" width="2" height="3" fill="#fff" />
      </svg>
      <svg className="ml-[8px]" width="17" height="10" viewBox="0 0 17 10" fill="#ccc">
        <path d="M3 10a3 3 0 01-.5-6A5 5 0 0112 2.500 3.800 3.800 0 0113.500 10z" />
      </svg>
      <svg className="ml-[10px]" width="13" height="13" viewBox="0 0 13 13" fill="none" stroke="#bbb">
        <path d="M.5 12.500a12 12 0 0112-12M3.500 12.500a9 9 0 019-9M6.500 12.500a6 6 0 016-6" />
      </svg>
      <svg className="ml-[8px]" width="16" height="13" viewBox="0 0 16 13" fill="none" stroke="#ccc">
        <path d="M.5 4.500h3L8 1v11L3.500 8.500h-3zM10 4a4 4 0 010 5M12 2.500a7 7 0 010 8" />
      </svg>
      <span className="ml-[10px] text-[12.5px] w-[24px] text-[#ddd]">ENG</span>
      <div className="ml-[4px] w-[78px] text-center text-[12.8px] leading-[18px] text-[#ddd] whitespace-nowrap">
        <div>7:40 AM</div>
        <div>11/07/2022</div>
      </div>
      <svg className="ml-[6px]" width="16" height="15" viewBox="0 0 16 15" fill="none" stroke="#fff">
        <path d="M.5.5h15v11h-4l-3 3-3-3h-5z" />
      </svg>
    </div>
  );
}

export default function App() {
  return (
    <div className="relative w-[1366px] h-[768px] overflow-hidden flex flex-col bg-white font-['Open_Sans','Noto_Sans',sans-serif]">
      <TitleBar />
      <Tabs />
      <Ribbon />
      <FormulaBar />
      <div className="flex h-[471px]">
        <div className="w-[1346px] shrink-0 flex flex-col overflow-hidden">
          <ColHeaders />
          <div className="flex h-[451px]">
            <RowHeaders />
            <Sheet />
          </div>
        </div>
        <VScroll />
      </div>
      <SheetTabs />
      <StatusBar />
      <Taskbar />
      <ClipToast />
    </div>
  );
}
